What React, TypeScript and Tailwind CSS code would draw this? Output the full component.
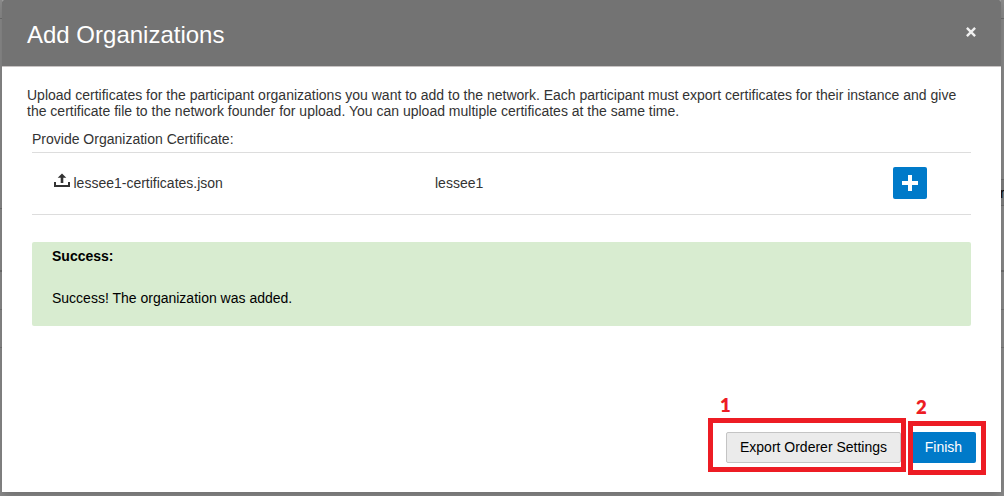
import React from "react";

function UploadIcon() {
  return (
    <svg className="h-[14px] w-4 shrink-0" viewBox="0 0 16 14" fill="#333333" aria-hidden="true">
      <path d="M8 0.5 L12.3 4.8 H9.3 V10 H6.7 V4.8 H3.7 Z" />
      <path d="M0 9 H2 V12 H14 V9 H16 V14 H0 Z" />
    </svg>
  );
}

function CloseIcon() {
  return (
    <svg className="h-[10px] w-[10px]" viewBox="0 0 10 10" stroke="#f0f0f0" strokeWidth="2.4" strokeLinecap="butt" aria-hidden="true">
      <path d="M0.9 0.9 L9.1 9.1 M9.1 0.9 L0.9 9.1" />
    </svg>
  );
}

function PlusIcon() {
  return (
    <svg className="h-4 w-4" viewBox="0 0 16 16" fill="#ffffff" aria-hidden="true">
      <path d="M6 0 H10 V6 H16 V10 H10 V16 H6 V10 H0 V6 H6 Z" />
    </svg>
  );
}

function Backdrop() {
  return (
    <div className="absolute inset-0 overflow-hidden bg-[#8c8c8c]" aria-hidden="true">
      <div className="absolute inset-x-0 top-[18px] h-px bg-[#707070]" />
      <div className="absolute right-0 top-[179px] h-[27px] w-10 border-y border-[#707070] bg-[#828282]" />
      <div className="absolute left-0 top-[208px] h-px w-10 bg-[#707070]" />
      <div className="absolute inset-x-0 top-[270px] h-[2px] bg-[#707070]" />
      <div className="absolute inset-x-0 top-[309px] h-px bg-[#777777]" />
      <div className="absolute inset-x-0 top-[347px] h-px bg-[#777777]" />
      <span className="absolute left-[1000px] top-[185px] text-[14px] leading-4 text-black">r</span>
    </div>
  );
}

export default function App() {
  return (
    <div className="relative h-[496px] w-[1004px] overflow-hidden font-['Liberation_Sans',Arial,sans-serif] text-[14px] leading-4 text-[#333333]">
      <Backdrop />
      <section className="relative ml-[2px] flex h-[492px] w-[999px] flex-col rounded-t-[2px] bg-white shadow-[0_4px_12px_rgba(0,0,0,0.22)]">
        <header className="flex h-[67px] shrink-0 justify-between rounded-t-[2px] border-b border-[#c8c4c4] bg-[#737373] pl-[25px] pr-[25px]">
          <h1 className="pt-[21px] text-[24px] leading-7 text-white">Add Organizations</h1>
          <button className="mt-[27px] h-[10px] w-[10px]" aria-label="Close">
            <CloseIcon />
          </button>
        </header>

        <main className="flex flex-col pl-[25px] pr-[30px] pt-5">
          <p className="w-[940px]">
            Upload certificates for the participant organizations you want to add to the network. Each participant must export certificates for their instance and give
            <br />
            the certificate file to the network founder for upload. You can upload multiple certificates at the same time.
          </p>
          <div className="ml-[5px] mt-3">
            <h2>Provide Organization Certificate:</h2>
            <div className="mt-[5px] flex h-[63px] items-start border-y border-[#dddddd] pt-[14px]">
              <div className="flex w-[403px] pl-[22px] pt-2">
                <div className="-mt-[2px]">
                  <UploadIcon />
                </div>
                <span className="ml-[3.5px]">lessee1-certificates.json</span>
              </div>
              <span className="grow pt-2">lessee1</span>
              <button className="mr-11 flex h-8 w-[34px] items-center justify-center rounded-[2px] bg-[#007ac9]" aria-label="Add">
                <PlusIcon />
              </button>
            </div>
            <div className="mt-[27px] h-[84px] rounded-[2px] bg-[#d8ecd0] pl-5 pt-[6px] text-black">
              <strong className="block">Success:</strong>
              <p className="mt-[26px]">Success! The organization was added.</p>
            </div>
          </div>
        </main>

        <footer className="mt-auto flex justify-end pb-[29px] pr-[25px]">
          <button className="h-[31px] w-[175px] rounded-[2px] border border-[#c4c4c4] bg-[#ebebeb] pb-[2px] text-black">Export Orderer Settings</button>
          <button className="ml-[10px] h-[31px] w-[65px] rounded-[2px] bg-[#007ac9] pb-[2px] text-white">Finish</button>
        </footer>
      </section>

      <div className="absolute left-[708px] top-[418px] h-[54px] w-[198px] border-[5px] border-[#ed1c24]" />
      <div className="absolute left-[908px] top-[421px] h-[54px] w-[78px] border-[5px] border-[#ed1c24]" />
      <span className="absolute left-[720px] top-[393px] font-['Lato',sans-serif] text-[18.5px] font-extrabold leading-6 text-[#ed1c24]">1</span>
      <span className="absolute left-[916px] top-[395px] font-['Lato',sans-serif] text-[18.5px] font-extrabold leading-6 text-[#ed1c24]">2</span>
    </div>
  );
}
